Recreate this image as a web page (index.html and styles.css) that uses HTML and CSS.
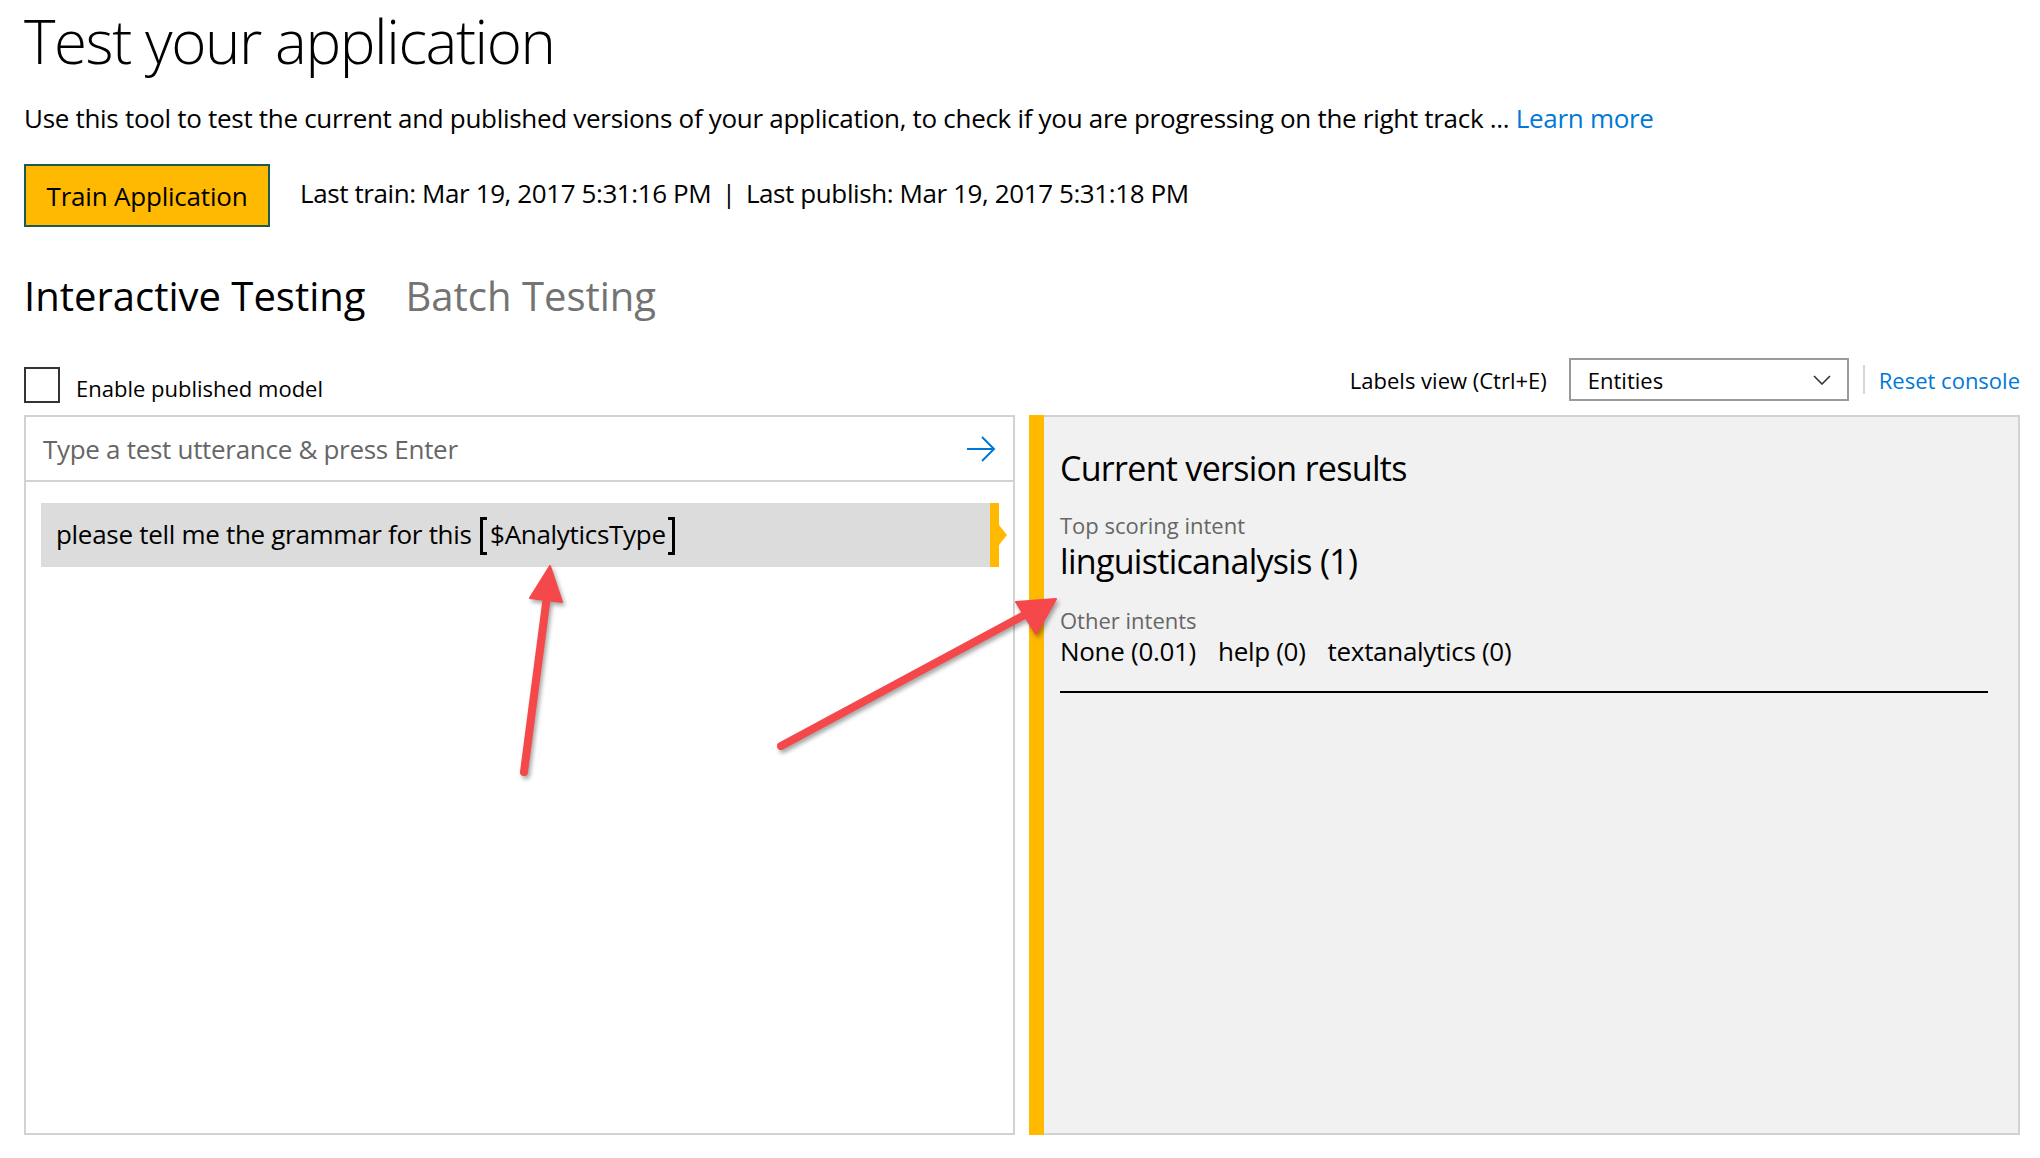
FILE: index.html
```html
<!DOCTYPE html>
<html lang="en">
<head>
<meta charset="utf-8">
<title>Test your application</title>
<link rel="stylesheet" href="styles.css">
</head>
<body>
<div class="page">
  <h1 class="title">Test your application</h1>
  <p class="desc">Use this tool to test the current and published versions of your application, to check if you are progressing on the right track ... <a class="link" href="#">Learn more</a></p>

  <div class="train-row">
    <button class="train-btn" type="button">Train Application</button>
    <span class="status">Last train: Mar 19, 2017 5:31:16 PM <span class="pipe">|</span> Last publish: Mar 19, 2017 5:31:18 PM</span>
  </div>

  <div class="tabs">
    <span class="tab tab-active">Interactive Testing</span>
    <span class="tab">Batch Testing</span>
  </div>

  <div class="toolbar">
    <label class="enable">
      <span class="checkbox"></span>
      <span class="enable-text">Enable published model</span>
    </label>
    <div class="labels-view">
      <span class="labels-text">Labels view (Ctrl+E)</span>
      <div class="select">
        <span>Entities</span>
        <svg class="chevron" width="18" height="10" viewBox="0 0 18 10"><path d="M1 1 L9 9 L17 1" fill="none" stroke="#333" stroke-width="1.6"/></svg>
      </div>
      <span class="vsep"></span>
      <a class="link" href="#">Reset console</a>
    </div>
  </div>

  <div class="panels">
    <div class="left-panel">
      <div class="input-row">
        <span class="placeholder">Type a test utterance &amp; press Enter</span>
        <svg class="send" width="30" height="28" viewBox="0 0 30 28"><path d="M1 14 H28 M16 2 L28 14 L16 26" fill="none" stroke="#0078d7" stroke-width="2"/></svg>
      </div>
      <div class="utterance">
        <span class="utext">please tell me the grammar for this <span class="br br-l"></span>$AnalyticsType<span class="br br-r"></span></span>
        <span class="marker"></span>
      </div>
    </div>

    <div class="right-panel">
      <div class="accent"></div>
      <div class="results">
        <div class="results-title">Current version results</div>
        <div class="label top-label">Top scoring intent</div>
        <div class="top-intent">linguisticanalysis (1)</div>
        <div class="label other-label">Other intents</div>
        <div class="other-intents"><span>None (0.01)</span><span>help (0)</span><span>textanalytics (0)</span></div>
        <div class="rule"></div>
      </div>
    </div>
  </div>

  <svg class="annotations" width="2040" height="1158" viewBox="0 0 2040 1158">
    <g class="arrow">
      <line x1="524" y1="772" x2="547" y2="596" />
      <polygon points="550,566 530,598 562,602" />
    </g>
    <g class="arrow">
      <line x1="781" y1="746" x2="1030" y2="612" />
      <polygon points="1056,599 1016,602 1036,634" />
    </g>
  </svg>
</div>
</body>
</html>
```

FILE: styles.css
```css
* { box-sizing: border-box; }

html, body {
  margin: 0;
  padding: 0;
  background: #ffffff;
}

body {
  font-family: "Open Sans", "Noto Sans", sans-serif;
  color: #000;
}

.page {
  position: relative;
  width: 2040px;
  min-height: 1158px;
  padding: 0 20px 0 24px;
}

.title {
  margin: 0;
  font-size: 60px;
  line-height: 82px;
  font-weight: 300;
  letter-spacing: -1.4px;
}

.desc {
  margin: 20px 0 0;
  font-size: 26px;
  line-height: 32px;
  letter-spacing: -0.3px;
}

.link {
  color: #0078d7;
  text-decoration: none;
}

.train-row {
  margin-top: 30px;
  display: flex;
  align-items: center;
  gap: 30px;
}

.train-btn {
  height: 63px;
  width: 246px;
  padding: 0;
  background: #ffb900;
  border: 2px solid #1c5a52;
  font-family: inherit;
  font-size: 26px;
  letter-spacing: -0.2px;
  color: #000;
}

.status {
  font-size: 26px;
  line-height: 32px;
  letter-spacing: -0.4px;
  padding-bottom: 5px;
}

.pipe { margin: 0 4px; }

.tabs {
  margin-top: 45px;
  display: flex;
  gap: 40px;
  font-size: 40px;
  line-height: 48px;
}

.tab { color: #737373; }
.tab-active { color: #000; }

.toolbar {
  margin-top: 38px;
  height: 45px;
  display: flex;
  justify-content: space-between;
  align-items: flex-start;
}

.enable {
  align-self: flex-end;
  display: flex;
  align-items: center;
  gap: 16px;
}

.checkbox {
  width: 36px;
  height: 36px;
  border: 2px solid #333;
}

.enable-text {
  font-size: 22px;
  line-height: 26px;
  padding-top: 6px;
}

.labels-view {
  display: flex;
  align-items: center;
  height: 43px;
  font-size: 22px;
}

.labels-text { margin-right: 22px; }

.select {
  width: 280px;
  height: 43px;
  border: 2px solid #9a9a9a;
  display: flex;
  align-items: center;
  justify-content: space-between;
  padding: 0 16px 0 17px;
}

.vsep {
  width: 2px;
  height: 29px;
  background: #d6d6d6;
  margin: 0 14px 0 14px;
}

.panels {
  margin-top: 12px;
  height: 720px;
  display: grid;
  grid-template-columns: 1fr 1fr;
  gap: 14px;
}

.left-panel {
  border: 2px solid #d2d2d2;
  background: #fff;
}

.input-row {
  height: 65px;
  border-bottom: 2px solid #d2d2d2;
  display: flex;
  align-items: center;
  justify-content: space-between;
  padding: 0 17px 0 17px;
}

.placeholder {
  font-size: 26px;
  line-height: 32px;
  letter-spacing: -0.3px;
  color: #666;
}

.utterance {
  position: relative;
  margin: 21px 14px 0 15px;
  height: 64px;
  background: #dcdcdc;
  display: flex;
  align-items: center;
  padding: 5px 0 0 15px;
}

.utext {
  font-size: 26px;
  line-height: 32px;
  letter-spacing: -0.3px;
}

.br {
  display: inline-block;
  vertical-align: middle;
  width: 7px;
  height: 38px;
  border: 3px solid #000;
  position: relative;
  top: -2px;
}

.br-l { border-right: none; margin: 0 3px 0 2px; }
.br-r { border-left: none; margin-left: 2px; }

.marker {
  position: absolute;
  top: 0;
  right: 0;
  width: 9px;
  height: 64px;
  background: #ffb900;
}

.marker::after {
  content: "";
  position: absolute;
  right: -8px;
  top: 22px;
  border-left: 8px solid #ffb900;
  border-top: 10px solid transparent;
  border-bottom: 10px solid transparent;
}

.right-panel {
  display: flex;
}

.accent {
  width: 15px;
  background: #ffb900;
}

.results {
  flex: 1;
  background: #f1f1f1;
  border: 2px solid #d2d2d2;
  border-left: none;
  padding: 31px 30px 0 16px;
}

.results-title {
  font-size: 34px;
  line-height: 40px;
  letter-spacing: -0.7px;
}

.label {
  font-size: 22px;
  line-height: 26px;
  color: #666;
}

.top-label { margin-top: 24px; }

.top-intent {
  margin-top: 2px;
  font-size: 34px;
  line-height: 42px;
  letter-spacing: -0.7px;
}

.other-label { margin-top: 25px; }

.other-intents {
  margin-top: 2px;
  font-size: 26px;
  line-height: 32px;
  letter-spacing: -0.3px;
  display: flex;
  gap: 22px;
}

.rule {
  margin-top: 24px;
  height: 2px;
  background: #000;
}

.annotations {
  position: absolute;
  left: 0;
  top: 0;
  pointer-events: none;
}

.arrow {
  filter: drop-shadow(2px 3px 2px rgba(0, 0, 0, 0.35));
}

.arrow line {
  stroke: #f5484a;
  stroke-width: 8;
  stroke-linecap: round;
}

.arrow polygon {
  fill: #f5484a;
  stroke: #f5484a;
  stroke-width: 2;
  stroke-linejoin: round;
}
```
